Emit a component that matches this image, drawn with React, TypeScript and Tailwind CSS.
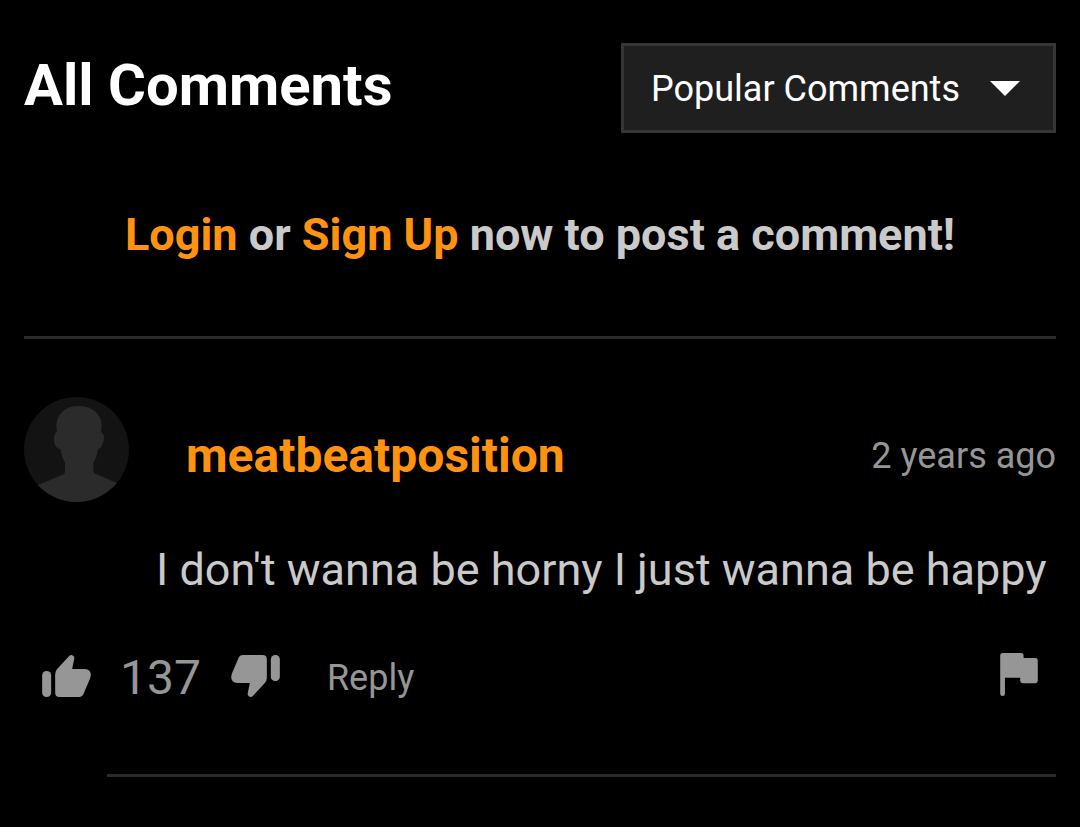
import clsx from "clsx";

const comments = [
   {
      id: "1",
      author: "meatbeatposition",
      age: "2 years ago",
      body: "I don't wanna be horny I just wanna be happy",
      votes: 137,
   },
];

export default function App() {
   return (
      <main className="min-h-screen bg-black px-6 pt-[43px] font-['Roboto',sans-serif] text-[#cacaca]">
         <header className="flex items-center justify-between gap-4">
            <h1 className="pb-1.5 text-[58px] leading-16 font-bold text-white">
               All Comments
            </h1>
            <SortSelect />
         </header>
         <p className="pt-[70px] pb-[69px] text-center text-[45px] leading-16 font-bold">
            <a href="#login" className="text-[#ff9310]">
               Login
            </a>{" "}
            or{" "}
            <a href="#signup" className="text-[#ff9310]">
               Sign Up
            </a>{" "}
            now to post a comment!
         </p>
         <section className="border-t-3 border-[#2b2b2b] pt-[58px]">
            {comments.map((c) => (
               <Comment key={c.id} comment={c} />
            ))}
         </section>
      </main>
   );
}

function SortSelect() {
   return (
      <div className="grid items-center">
         <select
            aria-label="Sort comments"
            className="col-start-1 row-start-1 h-[90px] appearance-none border-3 border-[#363636] bg-[#1f1f1f] pt-0.5 pr-[93px] pl-[27px] text-[36px] text-white"
         >
            <option>Popular Comments</option>
         </select>
         <svg
            viewBox="0 0 30 15"
            className="pointer-events-none col-start-1 row-start-1 mr-9 h-[15px] w-[30px] justify-self-end"
            aria-hidden="true"
         >
            <path d="M0 0H30L15 15Z" fill="#fff" />
         </svg>
      </div>
   );
}

function Comment({ comment }: { comment: (typeof comments)[number] }) {
   return (
      <article>
         <div className="flex items-center">
            <Avatar />
            <div className="flex flex-1 items-center justify-between pt-3 pl-[57px]">
               <a
                  href="#profile"
                  className="text-[48px] leading-16 font-bold text-[#ff9310]"
               >
                  {comment.author}
               </a>
               <span className="text-[36px] leading-16 text-[#969696]">
                  {comment.age}
               </span>
            </div>
         </div>
         <p className="pt-9 pl-[132px] text-[45px] leading-16">
            {comment.body}
         </p>
         <div className="mt-11 flex items-center pr-[18px] pl-[18px] text-[#969696]">
            <button type="button" aria-label="Like" className="pb-1">
               <Thumb />
            </button>
            <span className="pr-[30px] pl-[29px] text-[48px] leading-16">
               {comment.votes}
            </span>
            <button type="button" aria-label="Dislike" className="pb-1">
               <Thumb down />
            </button>
            <button type="button" className="ml-[47px] text-[36px] leading-16">
               Reply
            </button>
            <button type="button" aria-label="Report" className="ml-auto pb-2">
               <Flag />
            </button>
         </div>
         <hr className="mt-16 ml-[83px] border-t-3 border-[#2b2b2b]" />
      </article>
   );
}

function Avatar() {
   return (
      <svg
         viewBox="0 0 105 105"
         className="size-[105px] shrink-0 rounded-full bg-[#131313]"
         aria-hidden="true"
      >
         <path
            d="M14 88L38 78Q41 77 41 74V66Q37 59 36.500 52Q33 52 31 48Q29 42 30.500 38Q31 36 33 35Q31 25 35 19C39 12 46 9 54.500 9C63 9 71 12 75 19Q79 25 77 35Q79 36 80 39Q80.500 43 78 48Q76.500 52 74 52Q73 60 69.300 66V73Q69.300 76 72 77L93 86L105 105H0Z"
            fill="#2b2b2b"
         />
      </svg>
   );
}

function Thumb({ down }: { down?: boolean }) {
   return (
      <svg
         viewBox="0 0 146 126"
         className={clsx("h-[42px] w-[49px]", down && "rotate-180")}
         fill="currentColor"
         aria-hidden="true"
      >
         <rect y="48" width="27" height="78" rx="13" />
         <path d="M39 58Q39 48 45 42L81 3Q86 -2 93 2Q98 6 96 13L90 42H128Q146 43 146 60L144 70L124 117Q120 126 111 126H52Q39 126 39 113Z" />
      </svg>
   );
}

function Flag() {
   return (
      <svg
         viewBox="0 0 111 127"
         className="h-[43px] w-[38px]"
         fill="currentColor"
         aria-hidden="true"
      >
         <path d="M0 7Q0 0 7 0H62Q69 0 69 7V15H104Q111 15 111 22V82Q111 89 104 89H66Q59 89 59 82V73H14V120Q14 127 7 127Q0 127 0 120Z" />
      </svg>
   );
}
